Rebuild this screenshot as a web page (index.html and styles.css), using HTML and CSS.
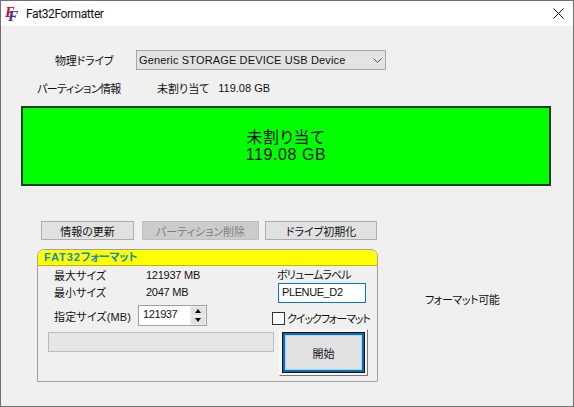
FILE: index.html
```html
<!DOCTYPE html>
<html lang="ja">
<head>
    <meta charset="UTF-8">
    <title>Fat32Formatter</title>
    <link rel="stylesheet" href="styles.css">
</head>
<body>
    <div class="window">
        <div class="titlebar">
            <svg class="app-icon" width="18" height="20" viewBox="0 0 18 20">
                <text x="0" y="13" class="icon-mark"><tspan class="icon-e">E</tspan><tspan class="icon-f" dx="-7" dy="4">F</tspan></text>
            </svg>
            <span class="title">Fat32Formatter</span>
            <svg class="close" width="11" height="11" viewBox="0 0 11 11">
                <path d="M.5.5l10 10M10.5.5l-10 10" stroke="#111" fill="none"/>
            </svg>
        </div>
        <div class="main">
            <div class="drive-row">
                <span class="drive-label">物理ドライブ</span>
                <div class="select">
                    <span>Generic STORAGE DEVICE USB Device</span>
                    <svg width="9" height="5" viewBox="0 0 9 5">
                        <path d="M.5.5l4 4 4-4" stroke="#555" fill="none"/>
                    </svg>
                </div>
            </div>
            <div class="info-row">
                <span class="info-label">パーティション情報</span>
                <span>未割り当て</span>
                <span class="info-size">119.08 GB</span>
            </div>
            <div class="partition">
                <span class="partition-name">未割り当て</span>
                <span class="partition-size">119.08 GB</span>
            </div>
            <div class="actions">
                <button class="btn btn-refresh">情報の更新</button>
                <button class="btn btn-delete" disabled>パーティション削除</button>
                <button class="btn btn-init">ドライブ初期化</button>
            </div>
            <div class="lower">
                <div class="group">
                    <div class="group-title"><span class="group-latin">FAT32</span>フォーマット</div>
                    <div class="group-body">
                        <div class="col-left">
                            <div class="size-row"><span class="size-label">最大サイズ</span><span class="size-value">121937 MB</span></div>
                            <div class="size-row"><span class="size-label">最小サイズ</span><span class="size-value">2047 MB</span></div>
                            <div class="spec-row">
                                <span class="spec-label">指定サイズ(MB)</span>
                                <div class="spin-input">121937</div>
                                <div class="spin">
                                    <span class="spin-btn"><i class="arrow-up"></i></span>
                                    <span class="spin-btn"><i class="arrow-down"></i></span>
                                </div>
                            </div>
                            <div class="progress"></div>
                        </div>
                        <div class="col-right">
                            <div class="volume-label">ボリュームラベル</div>
                            <div class="volume-input">PLENUE_D2</div>
                            <div class="quick"><span class="check"></span><span class="quick-label">クイックフォーマット</span></div>
                            <button class="start"><span>開始</span></button>
                        </div>
                    </div>
                </div>
                <div class="status">フォーマット可能</div>
            </div>
        </div>
    </div>
</body>
</html>
```

FILE: styles.css
```css
* { box-sizing: border-box; }
html, body { margin: 0; padding: 0; }
body { font-family: "Liberation Sans", "Noto Sans CJK JP", sans-serif; font-size: 11px; color: #111; background: #fff; font-feature-settings: "palt"; }
.window { width: 574px; height: 407px; border: 1px solid #707070; background: #f0f0f0; display: flex; flex-direction: column; overflow: hidden; }

.titlebar { height: 25px; background: #fff; display: flex; align-items: center; padding: 0 9px 0 4px; flex: none; }
.app-icon { flex: none; }
.icon-mark { font: italic bold 15px "Liberation Serif", serif; }
.icon-e { fill: #d01030; }
.icon-f { fill: #3a2fb0; }
.title { font-family: Roboto, sans-serif; font-size: 12px; letter-spacing: -0.4px; margin-left: 3px; flex: 1; }
.close { flex: none; }

.main { flex: 1; padding: 24px 0 0 20px; }
.drive-row { display: flex; align-items: center; height: 20px; padding-left: 34px; }
.drive-label { width: 81px; letter-spacing: -0.2px; }
.select { width: 250px; height: 20px; border: 1px solid #a6a6a6; background: #e3e3e3; display: flex; align-items: center; justify-content: space-between; padding: 0 3px 0 2px; letter-spacing: 0.15px; }
.info-row { display: flex; align-items: center; height: 16px; margin-top: 10px; padding-left: 16px; }
.info-label { width: 120px; letter-spacing: -0.6px; }
.info-size { margin-left: 9px; }

.partition { width: 530px; height: 80px; margin-top: 10px; border: 2px solid #1f3d1f; background: #00ff00; display: flex; flex-direction: column; align-items: center; justify-content: center; font-size: 16px; line-height: 17px; }
.partition-name { letter-spacing: 0.6px; }
.partition-size { letter-spacing: 0.6px; }

.actions { display: flex; margin: 35px 0 0 20px; }
.btn { height: 19px; padding: 0; border: 1px solid #adadad; background: #e1e1e1; font: inherit; color: #111; }
.btn-refresh { width: 93px; }
.btn-delete { width: 117px; margin-left: 8px; background: #cccccc; color: #808080; border-color: #bfbfbf; }
.btn-init { width: 112px; margin-left: 6px; }

.lower { display: flex; margin: 9px 0 0 16px; }
.group { width: 341px; height: 133px; border: 1px solid #a0a0a0; border-top-left-radius: 7px; border-top-right-radius: 7px; flex: none; }
.group-title { height: 16px; background: #ffff00; border-bottom: 1px solid #c8b400; border-top-left-radius: 6px; border-top-right-radius: 6px; color: #0a8fc0; font-weight: bold; font-size: 11px; line-height: 15px; padding-left: 6px; letter-spacing: -0.3px; }
.group-latin { letter-spacing: 0.9px; }
.group-body { display: flex; padding-left: 10px; }
.col-left { width: 224px; }
.size-row { display: flex; height: 17px; align-items: center; padding-left: 6px; }
.size-label { width: 92px; }
.size-value { letter-spacing: -0.25px; }
.spec-row { display: flex; align-items: center; margin-top: 5px; height: 21px; padding-left: 6px; }
.spec-label { width: 84px; letter-spacing: 0.15px; }
.spin-input { width: 52px; height: 21px; border: 1px solid #a0a0a0; border-right: none; background: #fff; padding: 0 4px; line-height: 17px; letter-spacing: -0.4px; }
.spin { width: 17px; height: 21px; border: 1px solid #a0a0a0; border-left: none; display: flex; flex-direction: column; }
.spin-btn { flex: 1; background: #e1e1e1; margin: 1px; display: flex; align-items: center; justify-content: center; }
.arrow-up { border: 3.5px solid transparent; border-top: none; border-bottom: 4px solid #111; }
.arrow-down { border: 3.5px solid transparent; border-bottom: none; border-top: 4px solid #111; }
.progress { width: 226px; height: 20px; margin-top: 6px; border: 1px solid #bcbcbc; background: #e6e6e6; }

.col-right { width: 100px; }
.volume-label { height: 17px; line-height: 19px; padding-left: 5px; letter-spacing: -0.8px; }
.volume-input { width: 88px; height: 20px; margin-left: 6px; border: 1px solid #0078d7; background: #fff; padding-left: 3px; line-height: 16px; letter-spacing: -0.4px; }
.quick { display: flex; align-items: center; height: 14px; margin-top: 8px; white-space: nowrap; }
.check { width: 13px; height: 13px; border: 1px solid #333; background: #fff; margin-right: 2px; flex: none; }
.quick-label { letter-spacing: -1.1px; }
.start { display: block; width: 89px; height: 47px; margin: 4px 0 0 7px; padding: 2px; border: 1px solid; border-color: #f8f8f8 #777 #777 #f8f8f8; background: #f8f8f8; font: inherit; color: #111; }
.start span { display: flex; align-items: center; justify-content: center; height: 100%; border: 1px solid #111; background: #e1e1e1; box-shadow: inset 0 0 0 2px #0a6cb8, inset 0 0 0 3px #a8d8f0; }

.status { margin: 42px 0 0 47px; white-space: nowrap; letter-spacing: -0.4px; }
```
